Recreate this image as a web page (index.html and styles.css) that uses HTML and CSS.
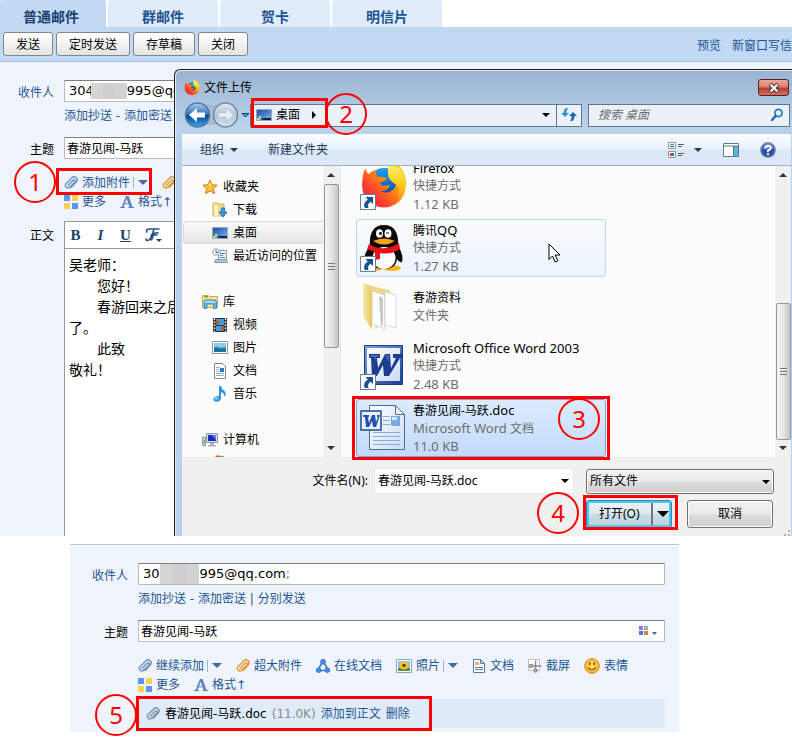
FILE: index.html
```html
<!DOCTYPE html>
<html lang="zh-CN">
<head>
<meta charset="utf-8">
<title>写信 - 添加附件</title>
<link rel="stylesheet" href="styles.css">
</head>
<body>
<svg class="defs" aria-hidden="true">
  <defs>
    <linearGradient id="gBlue" x1="0" y1="0" x2="0" y2="1"><stop offset="0" stop-color="#a9cdf0"/><stop offset=".48" stop-color="#2f6fbd"/><stop offset=".52" stop-color="#0a3f94"/><stop offset="1" stop-color="#2fb0ee"/></linearGradient>
    <linearGradient id="gGrey" x1="0" y1="0" x2="0" y2="1"><stop offset="0" stop-color="#dfe8f2"/><stop offset=".5" stop-color="#b4c6da"/><stop offset="1" stop-color="#d3e1f0"/></linearGradient>
    <linearGradient id="gFox" x1="1" y1="0" x2="0" y2="1"><stop offset="0" stop-color="#ffe226"/><stop offset=".4" stop-color="#ff980e"/><stop offset=".7" stop-color="#ff3f2e"/><stop offset="1" stop-color="#d4105e"/></linearGradient>
    <linearGradient id="gTail" x1="0" y1="0" x2="0" y2="1"><stop offset="0" stop-color="#fff36b"/><stop offset=".5" stop-color="#ffcf1c"/><stop offset="1" stop-color="#ff8a16"/></linearGradient>
    <linearGradient id="gGlobe" x1="0" y1="0" x2="0" y2="1"><stop offset="0" stop-color="#19a0f5"/><stop offset="1" stop-color="#152f8c"/></linearGradient>
    <linearGradient id="gFold" x1="0" y1="0" x2="1" y2="0"><stop offset="0" stop-color="#f8ebaa"/><stop offset="1" stop-color="#e5c862"/></linearGradient>
    <linearGradient id="gWord" x1="0" y1="0" x2="1" y2="1"><stop offset="0" stop-color="#7ea2e2"/><stop offset="1" stop-color="#1c3f95"/></linearGradient>
    <linearGradient id="gPaper" x1="0" y1="0" x2="1" y2="1"><stop offset="0" stop-color="#fff"/><stop offset="1" stop-color="#cbdcf5"/></linearGradient>
    <linearGradient id="gDesk" x1="0" y1="0" x2="1" y2="1"><stop offset="0" stop-color="#1b4ea8"/><stop offset="1" stop-color="#6fa9ea"/></linearGradient>
    <radialGradient id="gSmile"><stop offset="0" stop-color="#fff27a"/><stop offset="1" stop-color="#f6ad1d"/></radialGradient>

    <symbol id="clip" viewBox="0 0 14 14"><g fill="none" stroke="currentColor" stroke-linecap="round" stroke-linejoin="round" stroke-width="1.4"><path d="M4 9.6 9.2 4.2a1.2 1.2 0 0 1 1.7 1.7L5.6 11.3a2.5 2.5 0 0 1-3.6-3.5L7.8 1.9a3 3 0 0 1 4.4 4.2L7.4 11.400"/></g></symbol>
    <symbol id="more" viewBox="0 0 14 14"><path fill="#5b95f1" d="M0 0h6v6H0zM8 8h6v6H8z"/><path fill="#ffcf54" d="M8 0h6v6H8zM0 8h6v6H0z"/></symbol>
    <symbol id="format" viewBox="0 0 14 14"><path fill="#5b86bd" fill-rule="evenodd" d="M6 1H8.600l3.900 11H14v1H8.400v-1h1.100L8.700 9.200H4.600L3.600 12H5v1H0v-1h1.600zM6.500 3.800 5 8.200h3.300z"/></symbol>
    <symbol id="share" viewBox="0 0 14 14"><path d="M5.600 4.500 3 9M8.400 4.500 11 9M5 11.500h4" stroke="#2f78d8" stroke-width="1.500" fill="none"/><circle cx="7" cy="2.800" r="2.300" fill="#4a93ee" stroke="#2666c4"/><circle cx="2.600" cy="11.200" r="2.200" fill="#4a93ee" stroke="#2666c4"/><circle cx="11.400" cy="11.200" r="2.200" fill="#4a93ee" stroke="#2666c4"/></symbol>
    <symbol id="photo" viewBox="0 0 16 14"><path fill="#fff" stroke="#86a5cc" d="M.5.500h15v13H.5z"/><path fill="#8ec2ee" d="M2 2h12v10H2z"/><path fill="#5a8a32" d="M2 9h12v3H2z"/><circle cx="8" cy="6.500" r="4" fill="#f4c821"/><circle cx="8" cy="6.500" r="1.800" fill="#6d3d0c"/></symbol>
    <symbol id="doc" viewBox="0 0 14 14"><path fill="#fff" stroke="#4f7db4" d="M1.500.500h7l4 4v9h-11z"/><path fill="#d4e4f6" stroke="#4f7db4" d="M8.500.500v4h4z"/><path fill="#f2ad55" d="M3 3h4v3H3z"/><path stroke="#4f7db4" d="M3 8.500h8M3 10.500h8"/></symbol>
    <symbol id="snip" viewBox="0 0 14 14"><path fill="#fff" stroke="#c2c2c2" d="M.5.500h11v11H.5z"/><g stroke="#8b8b8b" fill="none" stroke-width="1.500"><path d="M7.500 1.500v8M4.500 7h9"/><circle cx="3" cy="7" r="1.500"/><circle cx="7.500" cy="11.500" r="1.500"/></g></symbol>
    <symbol id="smile" viewBox="0 0 16 16"><circle cx="8" cy="8" r="7.300" fill="url(#gSmile)" stroke="#d98a20"/><path d="M5.800 4.500v2.800M10.200 4.500v2.800" stroke="#7c4a12" stroke-width="1.500"/><path d="M4 9.500q4 4.500 8 0" fill="none" stroke="#8a5310" stroke-width="1.200"/></symbol>

    <symbol id="firefox" viewBox="0 0 48 48"><circle cx="24" cy="23" r="17" fill="url(#gGlobe)"/><path fill="url(#gFox)" d="M5 6q1 4 4 6 3-4 8-4-2 4 0 7 2-1 6 0l4 1q-1 3-6 4-1 3 2 4l7-1q-2 6-9 6 5 3 10 0 6-3 5-11 0-8-8-14 5 0 8 4-3-5-1-8 10 7 11 20Q45 35 36 42 24 49 12 42 2 35 2 23q0-9 3-17z"/><path fill="url(#gTail)" d="M29 1q12 2 16 16 3 14-7 24 3-10-1-18-10-5-9-12 0-5 1-10z"/></symbol>
    <symbol id="shortcut" viewBox="0 0 16 16"><path fill="#fff" stroke="#6c7d8c" d="M.5.500h15v15H.5z"/><path fill="#195390" d="M5.500 3h7.500v7l-2.500-2.300Q7 10 8.500 14H5Q2 9 7.800 5.400z"/></symbol>
    <symbol id="qq" viewBox="0 0 48 48"><ellipse cx="14" cy="44" rx="9" ry="3" fill="#f7b61c"/><ellipse cx="32" cy="44" rx="9" ry="3" fill="#f7b61c"/><path fill="#0a0a0a" d="M24 1C13 1 9 10 10 22 6 27 3 33 5 38q3 1 5-3 2 10 14 10t13-10q2 4 5 3Q44 31 38 22C39 10 35 1 24 1z"/><ellipse cx="24" cy="34" rx="11.500" ry="11" fill="#fff"/><path fill="#e6121c" d="M9 20q14 9 30-1l1 6q-9 6-20 4v6l-5 1v-8l-8-3z"/><ellipse cx="19.500" cy="9.500" rx="3.500" ry="4.300" fill="#fff"/><ellipse cx="28" cy="9.500" rx="3.500" ry="4.300" fill="#fff"/><circle cx="20.500" cy="9.500" r="1.400"/><path d="M26 9.500q1-2 3 0" fill="none" stroke="#000"/><path fill="#f5a614" d="M13 17q11-5 22 0-11 7-22 0z"/></symbol>
    <symbol id="bigfolder" viewBox="0 0 48 48"><path fill="#ecd98d" d="M3 0 16 4l14 3v14L16 46z"/><path fill="#fdfdfd" stroke="#bbb" stroke-width=".6" d="m12 8 13 4v34L12 41z"/><path fill="#fff" stroke="#c4c4c4" stroke-width=".6" d="m25 9 11 3v33l-11-3z"/><path fill="#888" opacity=".45" d="m19 13 4 2v26l-2 3z"/><path fill="url(#gFold)" d="M3 0q8 3 9 12v35L3 33z"/></symbol>
    <symbol id="word" viewBox="0 0 48 48"><path fill="url(#gWord)" stroke="#1d3d86" d="M4.500 3.500h38v39h-38z"/><path fill="url(#gPaper)" d="M7 6h33v33H7z"/><path fill="#1c3d90" d="M9 12h11v4h-3l1 10 7-14h5l1 14 5-10h-3v-4h10v4h-3L29 34h-5l-1-11-6 11h-5l-1-18H9z"/><path fill="#5c87d6" opacity=".6" d="M10 13h9l-1 2h-2l1 5-3-5h-4zM25 13h4v7z"/></symbol>
    <symbol id="wordfile" viewBox="0 0 48 48"><path fill="url(#gPaper)" stroke="#4b6ca8" d="M9.500 1.500h26l9 9v35h-35z"/><path fill="#edf3fc" stroke="#4b6ca8" d="M35.500 1.500v9h9z"/><path stroke="#8aaadb" stroke-width="1" d="M23 12.500h7M23 16.500h7M23 20.500h7M13 28.500h27M13 32.500h27M13 36.500h27M13 40.500h27"/><path fill="#7ea6de" d="M31 12h9v10h-9z"/><path fill="#d8e7f8" d="M32 13h5v3h-5z"/><path fill="#edf3fc" stroke="#1f479d" stroke-width="1.500" d="M1 7h20v19H1z"/><path fill="#2451ae" d="M3 11h6v2H8l1 6 3-8h3l1 7 2-5h-1v-2h3l-4 12h-3l-1-6-3 6H6L5 13H3z"/></symbol>

    <symbol id="star" viewBox="0 0 16 16"><path fill="#fdc13d" stroke="#e07818" d="m8 1 2.100 4.700 5.100.5-3.900 3.400 1.200 5L8 12l-4.500 2.600 1.200-5L.8 6.200l5.100-.5z"/><path fill="#fff2a0" d="m8 3 1.300 3.500H6.700z"/></symbol>
    <symbol id="down" viewBox="0 0 16 16"><path fill="#efd888" stroke="#c9a640" stroke-width=".8" d="M1 1h5l1 1h5v12H1z"/><path fill="#fff3bd" d="m2 2 4 2v11l-4-2z"/><path fill="#2d9ae4" stroke="#1767ab" stroke-width=".8" d="M9.500 6h3v4H15l-4 5-4-5h2.500z"/></symbol>
    <symbol id="desk" viewBox="0 0 16 14"><path fill="#9ba9bb" d="M0 1h16v12H0z"/><path fill="url(#gDesk)" d="M1 2h14v8H1z"/><path fill="#16233d" d="M7 10h8v2H7z"/><path fill="#2a5aa8" d="M1 10h6v2H1z"/><path fill="#ffd74e" d="M1 10h2v2H1zM3 8h2v2H3z"/><path fill="#4ad0ff" d="M3 10h2v2H3z"/></symbol>
    <symbol id="recent" viewBox="0 0 16 16"><path fill="#eef1f4" stroke="#8f9aa5" d="M6.500 2.500h8v9h-8z"/><path stroke="#3f97d8" d="M8 5.500h5M8 7.500h3M8 9.500h5"/><path fill="#bcc3ca" stroke="#8f9aa5" d="M3.500 11.500h11l1 3h-13z"/><circle cx="4" cy="4" r="3.300" fill="#fff" stroke="#8f9aa5"/><path d="M4 2v2.500h2" stroke="#4a5560" fill="none"/></symbol>
    <symbol id="lib" viewBox="0 0 16 16"><path fill="#f3e09a" stroke="#c9ab4f" d="M.5 3.500V1.500h6l1 1h8v11H.5z"/><path stroke="#5db43c" stroke-width="1.500" d="M2 2.700h4"/><path fill="#5ab4e8" stroke="#2f85c0" stroke-width=".8" d="M2 8q0-2 2-2h8.500q2 0 2 2v6.500h-3V10H5v4.500H2z"/><path fill="#c7ebff" d="M3 7h10v1.500H3z"/></symbol>
    <symbol id="video" viewBox="0 0 16 16"><path fill="#2b343c" d="M1 1h14v14H1z"/><path fill="#3fa0d9" d="M4 2h8v6H4zM4 9h8v5H4z"/><path fill="#c4502d" d="m4 3 4 2-3 3H4zm8 6-4 2 3 3h1z"/><path stroke="#f4f4f4" stroke-width="1.500" stroke-dasharray="1.500 1.500" d="M2.500 1.500v13M13.500 1.500v13"/></symbol>
    <symbol id="pic" viewBox="0 0 16 14"><path fill="#fff" stroke="#8796a5" d="M.5.500h15v12H.5z"/><path fill="#8ccaf4" d="M2 2h12v9H2z"/><path fill="#2c8a74" d="M2 6q4-1 6 1l6-1v2H2z"/><path fill="#1c6fae" d="M2 8h12v3H2z"/></symbol>
    <symbol id="text" viewBox="0 0 16 16"><path fill="#fff" stroke="#7f8b97" d="M2.500.500h8l3 3v12h-11z"/><path stroke="#8db0d4" d="M4 4.500h4M4 6.500h3M4 8.500h3M4 10.500h8M4 12.500h8"/><path fill="#2f78c4" d="M8 5h4v4H8z"/></symbol>
    <symbol id="music" viewBox="0 0 16 16"><path fill="#2d95d8" d="M7 0h2q.5 3 3.500 5 2.500 3 0 6 0-4-3.500-5v6.500Q8.500 15.500 5 15.800 1 15.500 1.500 12.500 3 9.500 7 10z"/><ellipse cx="4.600" cy="12.500" rx="2" ry="1.300" fill="#7fcdf5"/></symbol>
    <symbol id="pc" viewBox="0 0 16 16"><path fill="#c3ccd3" stroke="#8a949d" stroke-width=".8" d="M.5 5h3v9h-3z"/><path fill="#44b53f" d="M1.500 8h1v4h-1z"/><path fill="#d7dde2" stroke="#8f989f" d="M4.500 1.500h11v9h-11z"/><path fill="#1a2dc4" d="M6 3h8v6H6z"/><path fill="#5b7df2" d="M10 3h4v5z"/><path fill="#aab2b9" d="M8 11h4v2h2v1.500H6V13h2z"/></symbol>
    <symbol id="drive" viewBox="0 0 16 16"><path fill="#e6502b" d="M2 3q3-4 6-2v5H2z"/><path fill="#57b647" d="M8 1q4-1 5 2l-1 3H8z"/></symbol>
    <symbol id="refresh" viewBox="0 0 16 16"><path fill="#2f8fd9" d="M5 1h2Q5.200 3.500 5.500 6H8l-4 4-4-4h2.500Q2.500 2.500 5 1z"/><path fill="#1c62ae" d="M11 14H9q2-2 1.500-5H8l4-4 4 4h-2.500q0 4-2.500 5z"/></symbol>
    <symbol id="lens" viewBox="0 0 14 14"><circle cx="8.500" cy="5" r="3.600" fill="#e6f3ff" stroke="#3177bd" stroke-width="1.800"/><path stroke="#25609f" stroke-width="2.200" stroke-linecap="round" d="M5.800 7.800 2 12"/></symbol>
    <symbol id="views" viewBox="0 0 18 16"><path fill="#fff" stroke="#8a99aa" d="M.5.500h7v6h-7zM.5 9.500h7v6h-7z"/><path fill="#3f8fc9" d="M2 2h4v1H2z"/><path fill="#1f7d6d" d="M2 4h4v1H2z"/><path fill="#d43" d="M2 11h2v3H2z"/><path fill="#36b" d="M4 11h2v2H4z"/><path fill="#5a4" d="M4 13h2v1H4z"/><path stroke="#4d5b6c" d="M10 2.500h6M10 4.500h4M10 11.500h6M10 13.500h4"/></symbol>
    <symbol id="pane" viewBox="0 0 16 14"><path fill="#fff" stroke="#5f7990" d="M.5.500h15v13H.5z"/><path fill="#5bb6d3" d="M11 3h4v10h-4z"/><path stroke="#5f7990" d="M1 3h14M10.500 3v10"/></symbol>
    <symbol id="help" viewBox="0 0 16 16"><circle cx="8" cy="8" r="7.300" fill="#2a50ae" stroke="#8c97a8" stroke-width="1.400"/><path fill="#7b9ae0" d="M2.500 7a5.500 5.500 0 0 1 11 0z" opacity=".6"/><path fill="none" stroke="#fff" stroke-width="1.900" d="M5.500 6.400q0-2.600 2.600-2.600t2.600 2.200Q10.700 7.500 8 8.500v1.400"/><path fill="#fff" d="M7 11h2v2H7z"/></symbol>
  </defs>
</svg>

<main class="page">
  <section class="composer">
    <nav class="tabs">
      <a class="tab tab-on" href="#">普通邮件</a>
      <a class="tab" href="#">群邮件</a>
      <a class="tab" href="#">贺卡</a>
      <a class="tab" href="#">明信片</a>
    </nav>
    <div class="actions">
      <button class="btn">发送</button>
      <button class="btn">定时发送</button>
      <button class="btn">存草稿</button>
      <button class="btn">关闭</button>
      <div class="actions-end"><a href="#">预览</a><a href="#">新窗口写信</a></div>
    </div>

    <form class="form">
      <div class="row">
        <label class="label label-link" for="to1">收件人</label>
        <div class="field">
          <span>304</span><span class="mosaic"></span><span>995@qq.com</span>
          <input class="bare" id="to1" type="text">
        </div>
      </div>
      <div class="links"><a href="#">添加抄送</a> - <a href="#">添加密送</a></div>
      <div class="row">
        <label class="label" for="sub1">主题</label>
        <div class="field"><input class="bare subject" id="sub1" type="text" value="春游见闻-马跃"></div>
      </div>
      <div class="tools">
        <div class="toolrow">
          <a class="tool" href="#"><svg class="i14 blue"><use href="#clip"/></svg>添加附件<span class="split"></span><span class="caret"></span></a>
          <a class="tool" href="#" aria-label="超大附件"><svg class="i14 gold"><use href="#clip"/></svg></a>
        </div>
        <div class="toolrow">
          <a class="tool" href="#"><svg class="i14"><use href="#more"/></svg>更多</a>
          <a class="tool" href="#"><svg class="i14"><use href="#format"/></svg>格式↑</a>
        </div>
      </div>
      <div class="row row-top">
        <label class="label" for="body1">正文</label>
        <div class="editor">
          <div class="editbar">
            <button type="button" class="eb bold">B</button>
            <button type="button" class="eb ital">I</button>
            <button type="button" class="eb under">U</button>
            <button type="button" class="eb font" aria-label="字体"><svg width="18" height="16" viewBox="0 0 18 16"><path fill="none" stroke="#2b4f85" stroke-width="1.600" stroke-linecap="round" d="M3 5Q1 2 6 2h9M10 2Q7 13 4 13.500q-2 0-2-1.500M14 6q-4-1-5 3t-2 4M7 8h6"/><path fill="#1f3f6d" d="M12 12h6l-3 3z"/></svg></button>
            <button type="button" class="eb">T</button>
          </div>
          <textarea class="body" id="body1">吴老师：
　　您好！
　　春游回来之后
了。
　　此致
敬礼！</textarea>
        </div>
      </div>
    </form>
    <div class="ring ring-1">1</div>
    <div class="box box-1"></div>

    <section class="dialog" aria-label="文件上传">
      <header class="titlebar">
        <svg class="i16"><use href="#firefox"/></svg>
        <span class="title">文件上传</span>
        <button class="close" aria-label="关闭"><svg width="12" height="10" viewBox="0 0 12 10"><path d="m2 1 8 8M10 1 2 9" stroke="#4a3a40" stroke-width="4"/><path d="m2.500 1.500 7 7M9.500 1.500l-7 7" stroke="#fff" stroke-width="2"/></svg></button>
      </header>
      <div class="navbar">
        <svg class="history" viewBox="0 0 66 28"><path fill="#a6bdd6" stroke="#8fa7c2" d="M14 2.500q20 6 27 0v23q-8-6-27 0z"/><circle cx="13.500" cy="14" r="12" fill="url(#gBlue)" stroke="#5a7699" stroke-width="1.500"/><path fill="#fff" d="m5 14 8-7v4.500h8v5h-8V21z"/><circle cx="41.500" cy="14" r="12" fill="url(#gGrey)" stroke="#76889d" stroke-width="1.500"/><path fill="#e3ebf4" stroke="#a0b1c5" stroke-width=".6" d="m50 14-8-7v4.500h-8v5h8V21z"/><path fill="#3fa3cc" stroke="#17455f" d="M58 12.500h7L61.500 16z"/></svg>
        <div class="address">
          <svg class="i16"><use href="#desk"/></svg><span>桌面</span><span class="next"></span>
          <span class="caret caret-dark push"></span>
          <button class="reload" aria-label="刷新"><svg class="i16"><use href="#refresh"/></svg></button>
        </div>
        <label class="search"><input type="text" placeholder="搜索 桌面" aria-label="搜索 桌面"><svg class="i14"><use href="#lens"/></svg></label>
      </div>
      <div class="commands">
        <button class="cmd">组织<span class="caret caret-navy"></span></button>
        <button class="cmd">新建文件夹</button>
        <button class="cmd cmd-view push" aria-label="视图"><svg class="i18"><use href="#views"/></svg><span class="caret caret-navy"></span></button>
        <button class="cmd" aria-label="预览窗格"><svg class="i16"><use href="#pane"/></svg></button>
        <button class="cmd" aria-label="帮助"><svg class="i16"><use href="#help"/></svg></button>
      </div>
      <div class="panes">
        <ul class="tree">
          <li><svg class="i16"><use href="#star"/></svg>收藏夹</li>
          <li class="sub"><svg class="i16"><use href="#down"/></svg>下载</li>
          <li class="sub on"><svg class="i16"><use href="#desk"/></svg>桌面</li>
          <li class="sub"><svg class="i16"><use href="#recent"/></svg>最近访问的位置</li>
          <li class="group"><svg class="i16"><use href="#lib"/></svg>库</li>
          <li class="sub"><svg class="i16"><use href="#video"/></svg>视频</li>
          <li class="sub"><svg class="i16"><use href="#pic"/></svg>图片</li>
          <li class="sub"><svg class="i16"><use href="#text"/></svg>文档</li>
          <li class="sub"><svg class="i16"><use href="#music"/></svg>音乐</li>
          <li class="group"><svg class="i16"><use href="#pc"/></svg>计算机</li>
          <li class="sub"><svg class="i16"><use href="#drive"/></svg></li>
        </ul>
        <div class="scroll"><span class="up"></span><span class="thumb thumb-tree"></span><span class="down"></span></div>
        <div class="files">
          <div class="file"><svg class="i48"><use href="#firefox"/></svg><svg class="link"><use href="#shortcut"/></svg><div class="meta"><p class="name en">Firefox</p><p>快捷方式</p><p class="en">1.12 KB</p></div></div>
          <div class="file hover"><svg class="i48"><use href="#qq"/></svg><svg class="link"><use href="#shortcut"/></svg><div class="meta"><p class="name">腾讯<span class="en">QQ</span></p><p>快捷方式</p><p class="en">1.27 KB</p></div></div>
          <div class="file file-short"><svg class="i48"><use href="#bigfolder"/></svg><div class="meta"><p class="name">春游资料</p><p>文件夹</p></div></div>
          <div class="file"><svg class="i48"><use href="#word"/></svg><svg class="link"><use href="#shortcut"/></svg><div class="meta"><p class="name en">Microsoft Office Word 2003</p><p>快捷方式</p><p class="en">2.48 KB</p></div></div>
          <div class="file picked"><svg class="i48"><use href="#wordfile"/></svg><div class="meta"><p class="name">春游见闻-马跃<span class="en">.doc</span></p><p><span class="en">Microsoft Word</span> 文档</p><p class="en">11.0 KB</p></div></div>
        </div>
        <div class="scroll"><span class="up"></span><span class="thumb thumb-files"></span><span class="down"></span></div>
      </div>
      <footer class="foot">
        <label for="fname">文件名(N):</label>
        <div class="combo"><input id="fname" type="text" value="春游见闻-马跃.doc"><span class="caret caret-dark"></span></div>
        <div class="pick"><select class="wbtn" aria-label="文件类型"><option>所有文件</option></select><span class="caret caret-dark"></span></div>
        <div class="ends">
          <button class="wbtn open"><span>打开(O)</span><i></i><span class="caret caret-big"></span></button>
          <button class="wbtn cancel">取消</button>
        </div>
      </footer>
      <svg class="grip" viewBox="0 0 6 6"><path fill="#b4b4b4" d="M4 0h2v2H4zM4 4h2v2H4zM0 4h2v2H0z"/></svg>
      <svg class="cursor" viewBox="0 0 13 20"><path fill="#fff" stroke="#000" d="M1 1v15.500l3.500-3.500 2.700 6 2.600-1.200L7.200 12H12z"/></svg>
      <div class="box box-2"></div><div class="ring ring-2">2</div>
      <div class="box box-3"></div><div class="ring ring-3">3</div>
      <div class="box box-4"></div><div class="ring ring-4">4</div>
    </section>
  </section>

  <section class="result">
    <form class="form form-result">
      <div class="row">
        <label class="label label-link" for="to2">收件人</label>
        <div class="field">
          <span>30</span><span class="mosaic"></span><span>995@qq.com<em>;</em></span>
          <input class="bare" id="to2" type="text">
        </div>
      </div>
      <div class="links"><a href="#">添加抄送</a> - <a href="#">添加密送</a> | <a href="#">分别发送</a></div>
      <div class="row">
        <label class="label" for="sub2">主题</label>
        <div class="field"><input class="bare subject" id="sub2" type="text" value="春游见闻-马跃"><svg class="palette" viewBox="0 0 19 10"><path fill="#b061ee" d="M0 0h4v4H0z"/><path fill="#88bba8" d="M5 0h4v4H5z"/><path fill="#4080dc" d="M0 5h4v4H0z"/><path fill="#ea7a33" d="M5 5h4v4H5z"/><path fill="#4a6584" d="M13 6h5l-2.500 3z"/></svg></div>
      </div>
      <div class="tools">
        <div class="toolrow">
          <a class="tool" href="#"><svg class="i14 blue"><use href="#clip"/></svg>继续添加<span class="split"></span><span class="caret"></span></a>
          <a class="tool" href="#"><svg class="i14 gold"><use href="#clip"/></svg>超大附件</a>
          <a class="tool" href="#"><svg class="i14"><use href="#share"/></svg>在线文档</a>
          <a class="tool" href="#"><svg class="i16"><use href="#photo"/></svg>照片<span class="split"></span><span class="caret"></span></a>
          <a class="tool" href="#"><svg class="i14"><use href="#doc"/></svg>文档</a>
          <a class="tool" href="#"><svg class="i14"><use href="#snip"/></svg>截屏</a>
          <a class="tool" href="#"><svg class="i16"><use href="#smile"/></svg>表情</a>
        </div>
        <div class="toolrow">
          <a class="tool" href="#"><svg class="i14"><use href="#more"/></svg>更多</a>
          <a class="tool" href="#"><svg class="i14"><use href="#format"/></svg>格式↑</a>
        </div>
      </div>
      <div class="attached">
        <svg class="i14 steel"><use href="#clip"/></svg>
        <span>春游见闻-马跃.doc</span><span class="size">(11.0K)</span><a href="#">添加到正文</a><a href="#">删除</a>
      </div>
    </form>
    <div class="box box-5"></div><div class="ring ring-5">5</div>
  </section>
</main>
</body>
</html>
```
FILE: styles.css
```css
* { box-sizing: border-box; }
body { margin: 0; background: #fff; color: #000; font: 12px/18px "DejaVu Sans", "Noto Sans CJK SC", sans-serif; }
a { color: #1e5494; text-decoration: none; }
p { margin: 0; }
button, input, select, textarea { font: inherit; color: inherit; margin: 0; }
button { padding: 0; border: 0; background: none; }
svg { display: block; flex: none; }
.defs { position: absolute; width: 0; height: 0; }
.page { overflow: hidden; }
.i14 { width: 14px; height: 14px; }
.i16 { width: 16px; height: 16px; }
.i18 { width: 18px; height: 16px; }
.i48 { width: 48px; height: 48px; }
.blue { color: #6b93c4; }
.gold { color: #e0992f; }
.steel { color: #7a93b4; }
.push { margin-left: auto; }
.caret { flex: none; width: 0; height: 0; border: 5px solid transparent; border-top-color: #3f6ba5; border-bottom: 0; }
.caret-dark { border-width: 4px; border-bottom: 0; border-top-color: #000; }
.caret-navy { border-width: 4px; border-bottom: 0; border-top-color: #1e395b; }
.caret-big { border-width: 6px; border-bottom: 0; border-top-color: #000; }

/* Composer */
.composer { position: relative; overflow: hidden; background: #eff4fc; }
.tabs { display: flex; gap: 2px; background: #fff; }
.tab { width: 110px; height: 27px; padding-top: 4px; border-radius: 3px 3px 0 0; background: #e0ecf9; font-size: 14px; line-height: 26px; font-weight: bold; text-align: center; }
.tab-on { width: 106px; padding-right: 4px; background: #c1d9f3; color: #1a3f70; }
.actions { display: flex; align-items: center; gap: 3px; height: 35px; padding: 0 0 0 3px; background: #c1d9f3; border-bottom: 1px solid #a9c3e3; overflow: hidden; }
.btn { height: 24px; padding: 2px 12px 0; border: 1px solid #868686; border-radius: 3px; background: linear-gradient(#fff, #f3f3f3 50%, #e2e2e2); white-space: nowrap; }
.actions-end { display: flex; gap: 11px; margin-left: auto; padding-top: 3px; white-space: nowrap; }
.form { padding: 18px 14px 0 0; }
.row { display: flex; align-items: center; }
.label { flex: none; width: 54px; margin-right: 10px; padding-top: 4px; text-align: right; }
.label-link { color: #1e5494; }
.row-top { align-items: flex-start; margin-top: 10px; }
.row-top .label { padding-top: 6px; }
.field { display: flex; flex: 1; align-items: center; min-width: 0; height: 22px; padding: 0 4px; border: 1px solid #bbb; border-top: 1px solid #7f7f7f; background: #fff; font-size: 13px; white-space: nowrap; }
.field em { color: #888; font-style: normal; }
.bare { flex: 1; min-width: 0; padding: 0; border: 0; outline: 0; background: none; }
.subject { margin-left: -2px; padding-top: 2px; font-size: 12px; }
.mosaic { width: 36px; height: 16px; margin-left: -3px; background: linear-gradient(90deg, #d5d5d5 0 33%, #cfcdce 33% 66%, #d3d3d5 66%); }
.links { margin: 0 0 7px 64px; line-height: 28px; color: #1e5494; white-space: nowrap; }
.tools { padding: 14px 0 0 64px; }
.toolrow { display: flex; gap: 14px; height: 19px; white-space: nowrap; }
.tool { display: flex; align-items: center; gap: 4px; }
.split { width: 1px; height: 12px; margin-left: -1px; background: #9eb4cf; }
.editor { flex: 1; min-width: 0; border: 1px solid #999; border-bottom: 0; background: #fff; }
.editbar { display: flex; align-items: center; gap: 12px; height: 27px; padding-left: 4px; border-bottom: 1px solid #999; overflow: hidden; }
.eb { width: 13px; font: bold 15px/20px "Liberation Serif", serif; color: #1f3f6d; }
.ital { font-style: italic; }
.under { text-decoration: underline; }
.font { width: 18px; }
.body { display: block; width: 100%; height: 287px; padding: 6px 4px 0; border: 0; outline: 0; resize: none; background: none; font-size: 14px; line-height: 21px; overflow: hidden; }

/* File dialog */
.dialog { position: absolute; inset: 69px 0 0 174px; display: flex; flex-direction: column; padding: 0 1px 0 7px; border: solid #1c1c1c; border-width: 1px 0 0 1px; border-radius: 6px 0 0 0; background: linear-gradient(#99b4d1, #b9d1ea 54px); box-shadow: inset 1px 1px #e1ecf7; font-family: "Noto Sans", "Noto Sans CJK SC", sans-serif; }
.titlebar { display: flex; align-items: center; gap: 4px; height: 31px; padding: 4px 2px 0; }
.close { display: flex; align-items: center; justify-content: center; width: 31px; height: 17px; margin-left: auto; border: 1px solid #5b1d25; border-radius: 3px; background: linear-gradient(#e9aa9d, #d98072 48%, #b93a28 52%, #cf7263); }
.navbar { display: flex; align-items: center; height: 28px; padding: 0 1px 0 2px; }
.history { width: 66px; height: 28px; }
.address { display: flex; flex: 1; align-items: center; gap: 4px; height: 23px; min-width: 0; padding-left: 5px; border: 1px solid #62758c; background: #eaf1f9; }
.next { margin-left: 8px; border: 4px solid transparent; border-left-color: #000; border-right: 0; }
.reload { display: flex; align-items: center; justify-content: center; width: 25px; height: 21px; margin-left: 2px; border-left: 1px solid #62758c; }
.search { display: flex; flex: none; align-items: center; width: 202px; height: 23px; margin-left: 6px; padding: 0 5px 0 9px; border: 1px solid #62758c; background: #eaf1f9; }
.search input { flex: 1; min-width: 0; padding: 0; border: 0; background: none; }
.search input::placeholder { color: #6d6d6d; font-style: italic; opacity: 1; }
.commands { display: flex; align-items: center; gap: 21px; height: 32px; margin-top: 5px; padding: 0 15px 0 18px; border-bottom: 1px solid #a0afc3; background: linear-gradient(#fafdff, #e8f1fb 48%, #dce7f5 52%, #dde9f7); color: #1e395b; }
.cmd { display: flex; align-items: center; gap: 6px; }
.cmd:nth-child(2) { margin-left: 9px; }
.cmd-view { gap: 8px; margin-left: auto; }
.panes { display: flex; flex: 1; min-height: 0; background: #fcfcfc; overflow: hidden; }
.tree { flex: none; width: 141px; margin: 0; padding: 9px 0 0; list-style: none; }
.tree li { display: flex; align-items: center; gap: 5px; height: 23px; padding-left: 20px; white-space: nowrap; }
.tree .sub { padding-left: 30px; }
.tree .group { margin-top: 23px; }
.tree .on { margin-left: 1px; padding-left: 28px; border: 1px solid #d6d6d6; border-right: 0; border-radius: 3px 0 0 3px; background: linear-gradient(#fafafa, #e6e6e6); }
.scroll { display: flex; flex: none; flex-direction: column; align-items: center; width: 16px; padding: 7px 0; background: #f0f0f0; }
.up, .down { border: 4px solid transparent; border-top: 0; border-bottom-color: #333; }
.down { margin-top: auto; border: 4px solid transparent; border-top-color: #333; border-bottom: 0; }
.thumb { display: flex; width: 15px; border: 1px solid #979797; border-radius: 2px; background: repeating-linear-gradient(#777 0 1px, transparent 1px 3px) center / 7px 7px no-repeat, linear-gradient(90deg, #f5f5f5, #e4e4e4 50%, #c4c4c6); }
.thumb-tree { height: 164px; margin-top: 7px; }
.thumb-files { height: 137px; margin-top: 126px; }
.files { flex: 1; min-width: 0; margin-left: 1px; padding: 0 15px; border-left: 1px solid #d6e5f5; color: #6d6d6d; }
.file { position: relative; display: flex; align-items: center; gap: 5px; width: 250px; height: 58px; margin-bottom: 4px; padding-left: 3px; border: 1px solid transparent; border-radius: 3px; white-space: nowrap; }
.file:first-child { margin-top: -9px; }
.file-short { height: 52px; }
.meta p { height: 18px; }
.name { color: #000; }
.en { font-size: 13px; }
.link { position: absolute; left: 3px; bottom: 4px; width: 16px; height: 16px; }
.hover { border-color: #b8d6fb; background: linear-gradient(#fafbfd, #ebf3fd); }
.picked { border-color: #7da2ce; background: linear-gradient(#dcebfc, #c1dbfc); }
.foot { display: grid; grid-template-columns: 1fr 200px 188px; column-gap: 12px; row-gap: 6px; align-items: center; height: 79px; padding: 11px 17px 8px 0; background: #f0f0f0; }
.foot label { margin-right: -6px; text-align: right; }
.combo { display: flex; align-items: center; height: 26px; padding: 0 4px 0 3px; border: 1px solid #e3e9ef; background: #fff; }
.combo input { flex: 1; min-width: 0; padding: 0; border: 0; outline: 0; background: none; }
.pick { position: relative; }
.pick .caret { position: absolute; right: 4px; top: 11px; }
.wbtn { display: flex; align-items: center; justify-content: center; border: 1px solid #707070; border-radius: 3px; background: linear-gradient(#f2f2f2, #ebebeb 48%, #dddddd 52%, #cfcfcf); box-shadow: inset 0 0 0 1px #fcfcfc; }
select.wbtn { width: 100%; height: 25px; padding: 0 3px; appearance: none; }
.ends { display: flex; grid-column: 3; justify-content: space-between; padding: 0 1px 0 0; }
.ends .wbtn { width: 86px; height: 28px; }
.ends .open { justify-content: space-between; padding: 0 2px 0 12px; border-color: #3c7fb1; background: linear-gradient(#eaf4f9, #dfeaf0 48%, #c9dbe5 52%, #bfd3df); box-shadow: inset 0 0 0 2px #46c8f0; }
.open i { width: 2px; height: 22px; margin-right: -8px; background: #777; }
.grip { position: absolute; right: 2px; bottom: 0; width: 6px; height: 6px; }
.cursor { position: absolute; left: 373px; top: 173px; width: 13px; height: 20px; }

/* Numbered callouts */
.box { position: absolute; border: 3px solid #f00; pointer-events: none; }
.ring { position: absolute; width: 42px; height: 42px; border: 2px solid #f00; border-radius: 50%; color: #f00; font: 24px/38px "Noto Sans", sans-serif; text-align: center; pointer-events: none; }
.ring-1 { left: 14px; top: 161px; }
.box-1 { left: 56px; top: 168px; width: 96px; height: 27px; }
.box-2 { left: 76px; top: 28px; width: 77px; height: 30px; }
.ring-2 { left: 150px; top: 23px; }
.box-3 { left: 177px; top: 326px; width: 258px; height: 64px; }
.ring-3 { left: 383px; top: 328px; }
.box-4 { right: 114px; bottom: 6px; width: 95px; height: 35px; }
.ring-4 { right: 213px; bottom: 2px; }
.box-5 { left: 66px; bottom: 1px; width: 296px; height: 35px; }
.ring-5 { left: 25px; bottom: -4px; }

/* Result panel */
.result { position: relative; max-width: 609px; margin: 8px 113px 5px 70px; padding-top: 1px; border-top: 1px solid #a9c3e3; background: #fff; }
.form-result { padding: 17px 14px 4px 4px; background: #eff4fc; }
.form-result .mosaic { width: 39px; height: 20px; margin: 0 1px 0 0; }
.palette { width: 19px; height: 10px; margin-right: 2px; }
.attached { display: flex; align-items: center; gap: 5px; height: 29px; margin: 5px 0 0 64px; padding-left: 8px; background: #dfebf9; white-space: nowrap; }
.size { color: #888; }
```
